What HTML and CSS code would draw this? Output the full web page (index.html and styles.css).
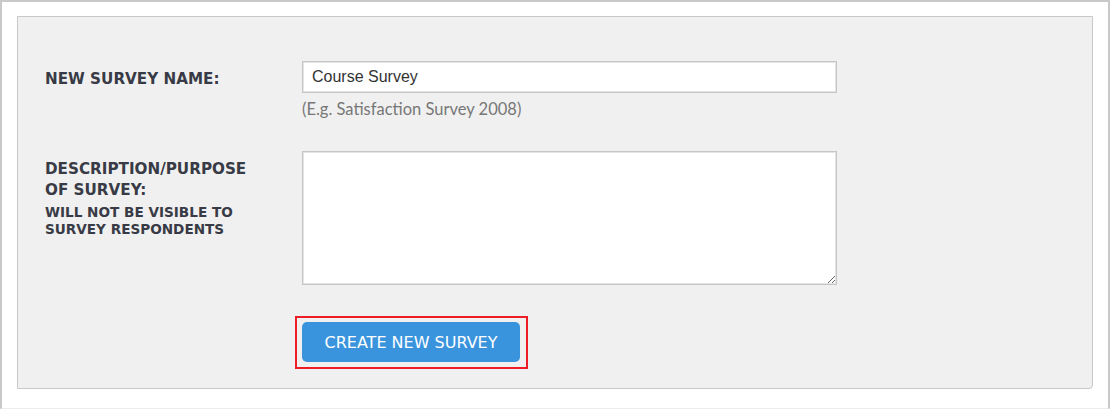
FILE: index.html
```html
<!DOCTYPE html>
<html>
<head>
<meta charset="utf-8">
<link rel="stylesheet" href="styles.css">
</head>
<body>
<div class="frame">
  <div class="panel">
    <div class="row row-name">
      <div class="label">NEW SURVEY NAME:</div>
      <div class="field">
        <input class="text-input" type="text" value="Course Survey">
        <div class="hint">(E.g. Satisfaction Survey 2008)</div>
      </div>
    </div>
    <div class="row row-desc">
      <div class="label">
        <div class="label-main">DESCRIPTION/PURPOSE<br>OF SURVEY:</div>
        <div class="label-sub">WILL NOT BE VISIBLE TO<br>SURVEY RESPONDENTS</div>
      </div>
      <div class="field">
        <textarea class="text-area"></textarea>
      </div>
    </div>
    <div class="row row-btn">
      <div class="label"></div>
      <div class="field">
        <div class="highlight">
          <button class="btn">CREATE NEW SURVEY</button>
        </div>
      </div>
    </div>
  </div>
</div>
</body>
</html>
```
FILE: styles.css
```css
html, body {
  margin: 0;
  padding: 0;
  background: #ffffff;
}
.frame {
  box-sizing: border-box;
  width: 1110px;
  height: 409px;
  border: 2px solid #c9c9c9;
  border-bottom: 1px solid #ececec;
  padding: 14px 15px 0 15px;
  background: #fff;
}
.panel {
  box-sizing: border-box;
  width: 1076px;
  height: 373px;
  background: #f0f0f0;
  border: 1px solid #c8c8c8;
  border-radius: 0 0 4px 0;
  padding: 44px 27px 0 27px;
}
.row {
  display: grid;
  grid-template-columns: 257px 535px;
}
.label {
  font-family: "DejaVu Sans", sans-serif;
  font-weight: 700;
  color: #383b45;
  font-size: 15.2px;
}
.row-name .label {
  padding-top: 8px;
  line-height: 21px;
}
.text-input {
  box-sizing: border-box;
  width: 535px;
  height: 32px;
  margin: 0;
  border: 1px solid #c6c6c6;
  box-shadow: inset 0 0 0 1px #e4e4e4;
  background: #fff;
  padding: 0 9px;
  font-family: "Liberation Sans", Arial, sans-serif;
  font-size: 16px;
  color: #333;
  outline: none;
  display: block;
}
.hint {
  margin-top: 8px;
  font-family: "Lato", sans-serif;
  font-size: 16.5px;
  color: #777;
  line-height: 16px;
}
.row-desc {
  margin-top: 34px;
}
.row-desc .label {
  padding-top: 8px;
}
.label-main {
  line-height: 21px;
}
.label-sub {
  margin-top: 3px;
  font-size: 13.6px;
  line-height: 17px;
}
.text-area {
  box-sizing: border-box;
  display: block;
  width: 535px;
  height: 134px;
  margin: 0;
  border: 1px solid #c6c6c6;
  box-shadow: inset 0 0 0 1px #e4e4e4;
  background: #fff;
  outline: none;
  font-family: "Liberation Sans", Arial, sans-serif;
  font-size: 15px;
}
.row-btn {
  margin-top: 31px;
}
.highlight {
  display: inline-block;
  margin-left: -7px;
  border: 2px solid #ee1c24;
  padding: 4px 6px 5px 5px;
}
.btn {
  display: block;
  box-sizing: border-box;
  width: 218px;
  height: 40px;
  border: none;
  border-radius: 5px;
  background: #3a94dd;
  color: #fff;
  font-family: "DejaVu Sans", sans-serif;
  font-size: 16px;
  font-weight: 400;
  padding: 0;
  cursor: pointer;
}
```
